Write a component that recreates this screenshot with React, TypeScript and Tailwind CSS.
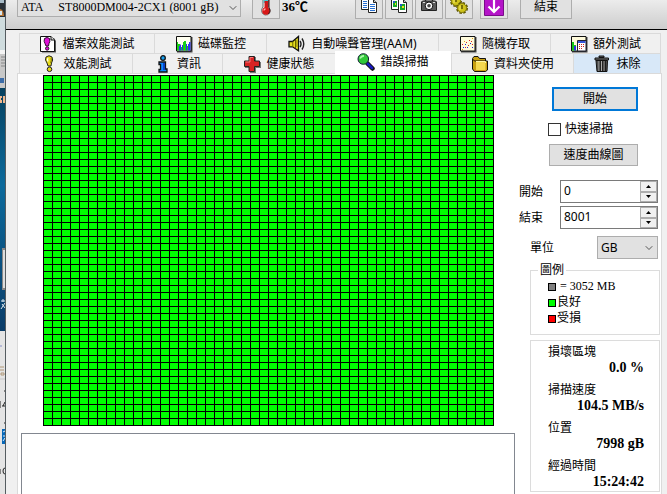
import { useState } from 'react';
import type { ReactNode } from 'react';
import { ChevronDown } from 'lucide-react';

/* ---------- Icons ---------- */

const Svg = ({ children }: { children: ReactNode }) => (
    <svg width="18" height="18" viewBox="0 0 18 18" className="shrink-0" aria-hidden="true">
        {children}
    </svg>
);

const FileBenchIcon = () => (
    <Svg>
        <path d="M3 3H15L17 6V17.500H3Z" fill="#555" />
        <path d="M1.500 1.500H12L15.500 5V16.500H1.500Z" fill="#fff" stroke="#111" />
        <path d="M12 1.500V5H15.500" fill="#ddd" stroke="#111" />
        <path d="M5.500 3.500Q8 1.500 10.500 3.500Q11.500 6.500 10 8.500L9.500 11H7L6 8.500Q4.500 6.500 5.500 3.500Z" fill="#e010d8" stroke="#301030" />
        <circle cx="8.200" cy="13.500" r="1.700" fill="#e010d8" stroke="#301030" />
    </Svg>
);

const DiskMonitorIcon = () => (
    <Svg>
        <path d="M2 2H17.500V17.500H2Z" fill="#444" />
        <path d="M1.500 1.500H16V16H1.500Z" fill="#fffff0" stroke="#111" />
        <path d="M2 7H3V9H5V11H6V15.500H2ZM8 7H9V6H11V10H12V15.500H8Z" fill="#18d018" />
        <path d="M4 11H5V9.500H6V15.500H4ZM7 10H8V15.500H7ZM11 9H12V15.500H11ZM13 9H14V7H15.500V15.500H13Z" fill="#3030f0" />
        <path d="M6 12H7V15.500H6ZM12 11H13V15.500H12Z" fill="#18d018" />
    </Svg>
);

const SpeakerIcon = () => (
    <Svg>
        <path d="M1 6.500H4.500L10.500 1.500V15.800L4.500 11.800H1Z" fill="#e8e020" stroke="#111" strokeWidth="1.300" />
        <path d="M4.800 6.500V12M7.500 5V13" stroke="#6c6400" />
        <path d="M8.800 5V12" stroke="#b0a410" strokeWidth="1.500" />
        <path d="M12 6Q14 9 12 12M14 3.500Q17.500 9 14 14.500" fill="none" stroke="#222" strokeWidth="1.400" />
    </Svg>
);

const RandomIcon = () => (
    <Svg>
        <path d="M2 2H17.500V17.500H2Z" fill="#444" />
        <path d="M1.500 1.500H16V16H1.500Z" fill="#fffbdc" stroke="#111" />
        <path d="M3 9h1v1h-1zM7 7h1v1h-1zM10 5h1v1h-1zM12 6h1v1h-1zM9 10h1v1h-1zM13 9h1v1h-1zM6 12h1v1h-1z" fill="#d82020" />
        <path d="M4 12h1v1h-1zM6 9h1v1h-1zM8 12h1v1h-1zM11 8h1v1h-1zM13 12h1v1h-1z" fill="#2020d8" />
        <path d="M13 3h1v1h-1zM3 14h1v1h-1zM5 6h1v1h-1z" fill="#e0a020" />
    </Svg>
);

const ExtraIcon = () => (
    <Svg>
        <path d="M2 2H17.500V17.500H2Z" fill="#444" />
        <path d="M1.500 1.500H16V16H1.500Z" fill="#fffbdc" stroke="#111" />
        <path d="M2 7H4V10H6V15.500H2Z" fill="#18c818" />
        <path d="M4 11H6V15.500H4Z" fill="#3030e0" />
        <path d="M7.500 5.500H16V16H7.500Z" fill="#fff" stroke="#223" />
        <path d="M8 6H15.500V8H8Z" fill="#3555d8" />
        <path d="M9 9h1v1h-1zM11 9h1v1h-1zM13 9h1v1h-1zM9 11h1v1h-1zM11 11h1v1h-1zM13 11h1v1h-1zM9 13h1v1h-1zM11 13h1v1h-1z" fill="#d02020" />
    </Svg>
);

const BenchIcon = () => (
    <Svg>
        <path d="M6 2Q9 -.5 12 2Q13.500 5 11.500 8L11 11H8L7 8Q4.500 5 6 2Z" fill="#e8dc18" stroke="#222" />
        <path d="M8 3Q7 4.500 8 6.500" fill="none" stroke="#fff" strokeWidth="1.200" />
        <path d="M11 3Q12 5 10.500 8" fill="none" stroke="#8c8408" strokeWidth="1.200" />
        <circle cx="9.500" cy="14.300" r="2.300" fill="#e8dc18" stroke="#222" />
    </Svg>
);

const InfoIcon = () => (
    <Svg>
        <circle cx="9" cy="3" r="2.300" fill="#18a0f0" stroke="#111" strokeWidth="1.300" />
        <path d="M5 7H11.500V14H13V17H5V14.500H6.500V9.500H5Z" fill="#1088ff" stroke="#111" strokeWidth="1.300" />
        <path d="M10 8V15" stroke="#0838c0" strokeWidth="1.700" />
    </Svg>
);

const HealthIcon = () => (
    <Svg>
        <path d="M7 2H13V7H18V13H13V18H7V13H2V7H7Z" fill="#777" />
        <path d="M6 1.500H11.500V6H16.500V11.500H11.500V16.500H6V11.500H1.500V6H6Z" fill="#d82424" stroke="#222" />
        <path d="M7 2.500H10M7 2.500V7H2.500" fill="none" stroke="#f87878" />
    </Svg>
);

const ScanIcon = () => (
    <Svg>
        <path d="M10.500 10.500L15.500 15.500" stroke="#111" strokeWidth="4.500" strokeLinecap="round" />
        <path d="M10.500 10.500L15 15" stroke="#1818c0" strokeWidth="2.500" strokeLinecap="round" />
        <circle cx="6.300" cy="6" r="5.300" fill="#30c838" stroke="#123" />
        <path d="M3 5.500Q4 3 7 2.800" fill="none" stroke="#a8f8a8" strokeWidth="1.700" />
    </Svg>
);

const FolderIcon = () => (
    <Svg>
        <path d="M1.500 14V3.500L3 1.500H7L8.500 3.500H14.500V6" fill="#c8a010" stroke="#111" />
        <path d="M3.500 6H16.500V15L14.500 16.500H3.500L1.500 14V4Z" fill="#c8a010" stroke="#111" />
        <path d="M5 6.500H14.500V15H5Z" fill="#f4d850" />
        <path d="M5 6.500H14.500V8" fill="none" stroke="#fff6a8" />
    </Svg>
);

const TrashIcon = () => (
    <Svg>
        <path d="M6 2.500H11V1H6Z" fill="#666" stroke="#111" />
        <path d="M2 3H15.500V5H2Z" fill="#777" stroke="#111" />
        <path d="M3 5.500H14.500L14 16.500H4Z" fill="#4c4c4c" stroke="#111" />
        <path d="M6 6V16M8.500 6V16M11 6V16" stroke="#aaa" />
        <path d="M7.200 6V16M9.800 6V16M12.300 6V16" stroke="#111" />
    </Svg>
);

const ThermometerIcon = () => (
    <svg width="14" height="24" viewBox="0 0 14 24" aria-hidden="true">
        <path d="M4 3Q7 0 9.500 3V14Q12 16 11 19.500Q9 22.500 6 22Q2.500 21 2.500 17.500Q3 15 4 14Z" fill="#fff" stroke="#666" />
        <path d="M4.500 3H9V10H4.500Z" fill="#48c8d0" />
        <path d="M5.500 8H9V15H5.500Z" fill="#d01818" />
        <circle cx="7" cy="18" r="3.800" fill="#d81818" />
        <path d="M10 4V14.500L11 18L9.500 21" fill="none" stroke="#501010" />
        <path d="M5 17.500Q5 16 6.500 16" fill="none" stroke="#ffb0b0" strokeWidth="1.400" />
    </svg>
);

const CopyIcon = ({ image }: { image?: boolean }) => (
    <svg width="18" height="18" viewBox="0 0 18 18" aria-hidden="true">
        <path d="M1.500 1.500H7.500L10 4V13.500H1.500Z" fill="#fff" stroke="#222" />
        <path d="M8.500 3.500H13.500L16.500 6.500V16.500H8.500Z" fill="#fff" stroke="#222" />
        <path d="M13.500 3.500V6.500H16.500" fill="#ccc" stroke="#222" />
        {image ? (
            <>
                <path d="M3 5H7V11H3ZM10 8H15V14H10Z" fill="#18a828" />
                <path d="M3 5H5V7H3ZM10 8H12V10H10Z" fill="#2858c8" />
                <path d="M12 10H14V12H12ZM5 7H6V9H5Z" fill="#f0e020" />
            </>
        ) : (
            <>
                <path d="M3 5.500H7M3 7.500H7M3 9.500H7M3 11.500H7" stroke="#2870d0" />
                <path d="M10 8.500H15M10 10.500H15M10 12.500H15M10 14.500H15" stroke="#2870d0" />
            </>
        )}
    </svg>
);

const CameraIcon = () => (
    <svg width="18" height="18" viewBox="0 0 18 18" aria-hidden="true">
        <path d="M5.500 6V2.500H12.500V6" fill="#ddd" stroke="#222" strokeWidth="1.400" />
        <path d="M2.500 5H15.500L16.500 6V14.500H1.500V6Z" fill="#5a5a5a" stroke="#222" />
        <circle cx="9" cy="9.800" r="3.800" fill="#fff" stroke="#111" />
        <circle cx="9" cy="9.800" r="1.800" fill="#444" />
        <path d="M3 6.500H5M13 6.500H15" stroke="#ddd" />
    </svg>
);

const GearsIcon = () => (
    <svg width="20" height="20" viewBox="0 0 20 20" aria-hidden="true">
        <circle cx="7" cy="6" r="5" fill="none" stroke="#5c5400" strokeWidth="2" strokeDasharray="2.500 1.400" />
        <circle cx="7" cy="6" r="4.500" fill="#d0c41c" stroke="#888008" />
        <circle cx="13" cy="13" r="5" fill="none" stroke="#5c5400" strokeWidth="2" strokeDasharray="2.500 1.400" />
        <circle cx="13" cy="13" r="4.500" fill="#d0c41c" stroke="#888008" />
        <path d="M7 3V7M13 10V14" stroke="#5c5400" strokeWidth="1.500" />
        <path d="M5 3.500V8M11 10.500V15" stroke="#f4ec70" />
    </svg>
);

const DownIcon = () => (
    <svg width="20" height="22" viewBox="0 0 20 22" aria-hidden="true">
        <path d="M.5 .5H19.500V21.500H.5Z" fill="#b414c8" stroke="#780c88" />
        <path d="M10 3V18M4.500 12.500L10 18L15.500 12.500" fill="none" stroke="#fff" strokeWidth="2.200" />
    </svg>
);

/* Slice of the desktop that shows past the window's left edge */
const DesktopEdge = () => (
    <div className="w-[6px] shrink-0 overflow-hidden bg-[#e4e4e4]">
        <svg width="6" height="494" viewBox="0 0 6 494" aria-hidden="true">
            <defs>
                <linearGradient id="sea" x1="0" y1="0" x2="0" y2="1">
                    <stop offset="0" stopColor="#07415f" />
                    <stop offset=".4" stopColor="#0b6a9c" />
                    <stop offset="1" stopColor="#0a3c68" />
                </linearGradient>
            </defs>
            <path d="M0 0H6V20H0Z" fill="#2a3138" />
            <path d="M0 0H4V3H0Z" fill="#a8bcc8" />
            <path d="M0 9Q4 10 4 16H0Z" fill="#b87838" />
            <path d="M0 11H2V15H0Z" fill="#d8e8f0" />
            <path d="M0 17H6V50H0Z" fill="#cfdcde" />
            <path d="M0 50H6V54H0Z" fill="#f4f4f4" />
            <path d="M0 54H6V88H0Z" fill="#c8c8c8" />
            <path d="M1 57H5M1 60H5M1 63H5M1 66H5" stroke="#888" />
            <path d="M0 78H4V83H0Z" fill="#3c6ca8" />
            <path d="M0 88H6V331H0Z" fill="url(#sea)" />
            <path d="M0 96H2V98H1V100H2V103H0ZM3 96H5V103H3Z" fill="#f0b890" />
            <path d="M2 248H6V290H2Z" fill="#888" />
            <path d="M3 250H5V288H3Z" fill="#ddd" />
            <path d="M1 301H5M3 299V302M1 309L5 303M2 304L5 308" stroke="#dde8ee" />
            <path d="M0 346H2" stroke="#8890c8" />
            <path d="M0 367H4M0 370H4M1 373H4V375H1Z" stroke="#b09878" fill="none" />
            <path d="M0 379H5" stroke="#c8c8c8" />
            <path d="M4 391H5M0 401V408M3 406L5 402M2 406H5M4 423H5M0 469V474M5 468Q3 468 3 471Q3 474 5 474" stroke="#222" fill="none" />
            <path d="M2 429H6V444H2Z" fill="#0868b8" />
            <path d="M3 432L5 431M3 436H5M3 441L5 438" stroke="#d8ecff" />
            <path d="M5.500 0V494" stroke="#555c60" />
        </svg>
    </div>
);

/* ---------- Controls ---------- */

interface TabProps {
    icon: ReactNode;
    label: string;
    selected?: boolean;
    hot?: boolean;
    onSelect: (label: string) => void;
}

const Tab = ({ icon, label, selected, hot, onSelect }: TabProps) => (
    <button
        role="tab"
        aria-selected={!!selected}
        onClick={() => onSelect(label)}
        className={`flex items-center justify-center gap-[5px] whitespace-nowrap border-[#dadada] ${
            selected
                ? 'relative z-10 -mt-[2px] -mb-px bg-white pb-[2px]'
                : hot
                  ? 'border-t border-l bg-[#d8e8f8]'
                  : 'border-t border-l bg-[#f0f0f0]'
        }`}
    >
        {icon}
        {label}
    </button>
);

const ToolButton = ({ title, children }: { title: string; children: ReactNode }) => (
    <button title={title} className="flex h-[28px] w-[28px] shrink-0 items-center justify-center border border-[#adadad] bg-[#e1e1e1]">
        {children}
    </button>
);

const NumberBox = ({ id, label, value }: { id: string; label: string; value: number }) => {
    const [current, setCurrent] = useState(value);

    return (
        <div className="flex items-center justify-between">
            <label htmlFor={id}>{label}</label>
            <div className="flex h-[23px] w-[98px] border border-[#7a7a7a] bg-white">
                <input
                    id={id}
                    value={current}
                    onChange={e => setCurrent(Number(e.target.value) || 0)}
                    className="w-full min-w-0 flex-1 pb-[2px] pl-[3px] outline-none"
                />
                <div className="flex w-[17px] flex-col">
                    <button aria-label="+" onClick={() => setCurrent(current + 1)} className="flex flex-1 items-center justify-center border border-[#adadad] bg-[#f0f0f0]">
                        <svg width="5" height="3" viewBox="0 0 5 3"><path d="M0 3L2.500 0L5 3Z" /></svg>
                    </button>
                    <button aria-label="-" onClick={() => setCurrent(Math.max(0, current - 1))} className="flex flex-1 items-center justify-center border border-[#adadad] bg-[#f0f0f0]">
                        <svg width="5" height="3" viewBox="0 0 5 3"><path d="M0 0L2.500 3L5 0Z" /></svg>
                    </button>
                </div>
            </div>
        </div>
    );
};

/* ---------- Data ---------- */

const backTabs = [
    { label: '檔案效能測試', icon: <FileBenchIcon /> },
    { label: '磁碟監控', icon: <DiskMonitorIcon /> },
    { label: '自動噪聲管理(AAM)', icon: <SpeakerIcon /> },
    { label: '隨機存取', icon: <RandomIcon /> },
    { label: '額外測試', icon: <ExtraIcon /> },
];

const frontTabs = [
    { label: '效能測試', icon: <BenchIcon /> },
    { label: '資訊', icon: <InfoIcon /> },
    { label: '健康狀態', icon: <HealthIcon /> },
    { label: '錯誤掃描', icon: <ScanIcon /> },
    { label: '資料夾使用', icon: <FolderIcon /> },
    { label: '抹除', icon: <TrashIcon />, hot: true },
];

const stats = [
    { label: '損壞區塊', value: '0.0 %' },
    { label: '掃描速度', value: '104.5 MB/s' },
    { label: '位置', value: '7998 gB' },
    { label: '經過時間', value: '15:24:42' },
];

const blocks = Array.from({ length: 50 * 50 }, (_, i) => i);

const App = () => {
    const [tab, setTab] = useState('錯誤掃描');

    return (
        <div className="flex h-screen overflow-hidden bg-[#f0f0f0] font-['Noto_Sans','Noto_Sans_CJK_TC',sans-serif] text-[12px] leading-[16px] text-black">
            <DesktopEdge />

            <div className="flex min-w-0 flex-1 flex-col">
                {/* Toolbar */}
                <header className="flex h-[30px] shrink-0 items-end overflow-hidden border-b border-black bg-linear-to-b from-[#ececec] to-[#cdcdcd] pb-[10px] pl-[11px]">
                    <div className="relative mb-[2px] w-[224px] shrink-0">
                        <select
                            aria-label="磁碟"
                            className="block h-[23px] w-full appearance-none border border-[#adadad] bg-[#e1e1e1] pt-[2px] pl-[3px] font-['Liberation_Serif','Noto_Sans_CJK_TC',serif]"
                        >
                            <option>{'ATA\u00a0\u00a0\u00a0\u00a0\u00a0ST8000DM004-2CX1 (8001 gB)'}</option>
                        </select>
                        <ChevronDown size={12} strokeWidth={2} className="pointer-events-none absolute top-[8px] right-[2px] text-[#555]" />
                    </div>
                    <div className="ml-[11px] flex shrink-0 items-end gap-[2px]">
                        <ToolButton title="溫度"><ThermometerIcon /></ToolButton>
                        <span className="mb-[4px] w-[73px] font-['Liberation_Serif','Noto_Sans_CJK_TC',serif] text-[13px] font-bold">36℃</span>
                    </div>
                    <div className="flex shrink-0 gap-[2px]">
                        <ToolButton title="複製文字"><CopyIcon /></ToolButton>
                        <ToolButton title="複製影像"><CopyIcon image /></ToolButton>
                        <ToolButton title="擷取"><CameraIcon /></ToolButton>
                        <ToolButton title="選項"><GearsIcon /></ToolButton>
                    </div>
                    <div className="ml-[7px] flex shrink-0 gap-[12px]">
                        <ToolButton title="最小化"><DownIcon /></ToolButton>
                        <button className="h-[28px] w-[52px] border border-[#adadad] bg-[#e1e1e1] pt-[4px]">結束</button>
                    </div>
                </header>

                <main className="flex min-h-0 flex-1 flex-col pt-[3px] pr-[5px] pl-[11px]">
                    {/* Tabs */}
                    <div role="tablist" className="mr-px ml-[2px] shrink-0 border-r border-[#dadada]">
                        <div className="grid h-[20px] grid-cols-[135fr_112fr_172fr_112fr_110fr]">
                            {backTabs.map(t => (
                                <Tab key={t.label} {...t} selected={t.label === tab} onSelect={setTab} />
                            ))}
                        </div>
                        <div className="grid h-[20px] grid-cols-[113fr_90fr_113fr_116fr_122fr_87fr]">
                            {frontTabs.map(t => (
                                <Tab key={t.label} {...t} selected={t.label === tab} onSelect={setTab} />
                            ))}
                        </div>
                    </div>

                    {/* Error scan page */}
                    <section className="flex flex-1 border border-[#dadada] bg-white">
                        <div className="flex min-w-0 flex-1 flex-col gap-[7px] px-[3px] pt-px">
                            <div className="ml-[22px] grid w-[451px] auto-rows-[6px] grid-cols-[repeat(50,8px)] gap-px bg-black p-px">
                                {blocks.map(i => (
                                    <div key={i} className="bg-[#00ff00]" />
                                ))}
                            </div>
                            <textarea aria-label="記錄" readOnly className="block min-h-24 w-full flex-1 resize-none border border-[#828790] outline-none" />
                        </div>

                        <aside className="w-[143px] shrink-0 pt-[13px] pr-px">
                            <div className="flex flex-col items-end pr-[22px]">
                                <button className="h-[24px] w-[86px] border-2 border-[#0078d7] bg-[#e1e1e1]">開始</button>
                                <label className="mt-[10px] flex w-[90px] items-center gap-[4px]">
                                    <input type="checkbox" className="h-[13px] w-[13px] appearance-none border border-[#333] bg-white checked:bg-[#0078d7]" />
                                    快速掃描
                                </label>
                                <button className="mt-[7px] h-[22px] w-[89px] border border-[#adadad] bg-[#e1e1e1]">速度曲線圖</button>
                            </div>

                            <div className="mt-[14px] flex flex-col gap-[3px] pr-[2px] pl-px">
                                <NumberBox id="start" label="開始" value={0} />
                                <NumberBox id="end" label="結束" value={8001} />
                            </div>

                            <div className="mt-[7px] flex items-center justify-between pr-[2px] pl-[12px]">
                                <label htmlFor="unit">單位</label>
                                <div className="relative w-[61px]">
                                    <select id="unit" className="block h-[23px] w-full appearance-none border border-[#adadad] bg-[#e1e1e1] pl-[3px]">
                                        <option>GB</option>
                                        <option>MB</option>
                                    </select>
                                    <ChevronDown size={12} strokeWidth={2} className="pointer-events-none absolute top-[6px] right-[3px] text-[#555]" />
                                </div>
                            </div>

                            <fieldset className="mt-[3px] ml-[12px] h-[73px] border border-[#dcdcdc] pl-[17px] font-['Liberation_Serif','Noto_Sans_CJK_TC',serif]">
                                <legend className="-ml-[10px] px-[2px]">圖例</legend>
                                <ul>
                                    <li className="flex items-center gap-[4px]"><span className="mt-[2px] h-[8px] w-[8px] border border-black bg-[#808080]" />= 3052 MB</li>
                                    <li className="flex items-center gap-px"><span className="mt-[2px] h-[8px] w-[8px] border border-black bg-[#00ff00]" />良好</li>
                                    <li className="flex items-center gap-px"><span className="mt-[2px] h-[8px] w-[8px] border border-black bg-[#ff0000]" />受損</li>
                                </ul>
                            </fieldset>

                            <dl className="mt-[5px] ml-[12px] flex flex-col gap-[6px] border border-[#dcdcdc] pt-[3px] pr-[15px] pb-px pl-[17px]">
                                {stats.map(s => (
                                    <div key={s.label}>
                                        <dt>{s.label}</dt>
                                        <dd className="text-right font-['Liberation_Serif',serif] text-[14px] leading-[16px] font-bold">{s.value}</dd>
                                    </div>
                                ))}
                            </dl>
                        </aside>
                    </section>
                </main>
            </div>
        </div>
    );
};

export default App;
